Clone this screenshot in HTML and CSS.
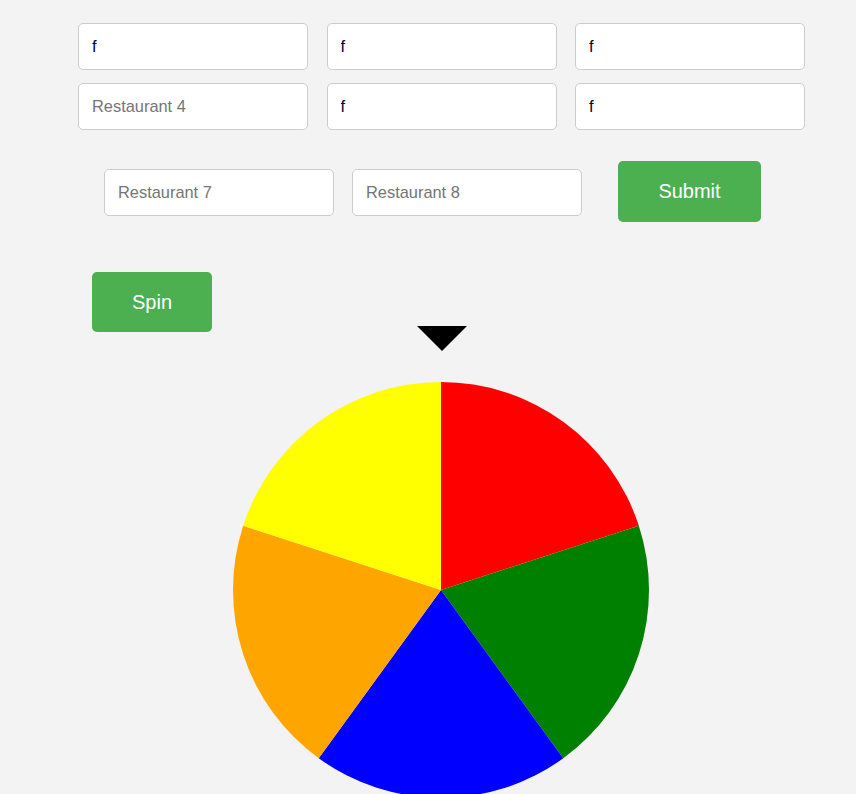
FILE: index.html
```html
<!DOCTYPE html>
<html>
<head>
<meta charset="utf-8">
<link rel="stylesheet" href="styles.css">
</head>
<body>
<div class="page">
  <div class="grid">
    <input class="field" type="text" value="f">
    <input class="field" type="text" value="f">
    <input class="field" type="text" value="f">
    <input class="field" type="text" placeholder="Restaurant 4">
    <input class="field" type="text" value="f">
    <input class="field" type="text" value="f">
  </div>
  <div class="row">
    <input class="field" type="text" placeholder="Restaurant 7">
    <input class="field" type="text" placeholder="Restaurant 8">
    <button class="btn submit">Submit</button>
  </div>
  <button class="btn spin">Spin</button>
  <div class="pointer"></div>
  <svg class="wheel" width="416" height="416" viewBox="0 0 416 416">
    <path d="M208 208 L208 0 A208 208 0 0 1 405.82 143.73 Z" fill="#ff0000"/>
    <path d="M208 208 L405.82 143.73 A208 208 0 0 1 330.26 376.27 Z" fill="#008000"/>
    <path d="M208 208 L330.26 376.27 A208 208 0 0 1 85.74 376.27 Z" fill="#0000ff"/>
    <path d="M208 208 L85.74 376.27 A208 208 0 0 1 10.18 143.73 Z" fill="#ffa500"/>
    <path d="M208 208 L10.18 143.73 A208 208 0 0 1 208 0 Z" fill="#ffff00"/>
  </svg>
</div>
</body>
</html>
```
FILE: styles.css
```css
html, body {
  margin: 0;
  padding: 0;
  background: #f3f3f3;
  font-family: "Liberation Sans", Arial, sans-serif;
}
.page {
  display: flex;
  flex-direction: column;
  align-items: flex-start;
  padding-top: 23px;
}
.grid {
  display: grid;
  grid-template-columns: 230px 230px 230px;
  column-gap: 18.5px;
  row-gap: 13px;
  margin-left: 78px;
}
.field {
  box-sizing: border-box;
  width: 230px;
  height: 47px;
  padding: 0 13px;
  border: 1px solid #cccccc;
  border-radius: 5px;
  background: #ffffff;
  font-family: "Liberation Sans", Arial, sans-serif;
  font-size: 16.4px;
  color: #000033;
  outline: none;
}
.field::placeholder {
  color: #757575;
}
.row {
  display: flex;
  align-items: flex-start;
  margin-top: 31px;
  margin-left: 104px;
}
.row .field {
  margin-top: 8px;
}
.row .field + .field {
  margin-left: 18px;
}
.btn {
  box-sizing: border-box;
  height: 60px;
  border: none;
  border-radius: 5px;
  background: #4caf50;
  color: #ffffff;
  font-family: "Liberation Sans", Arial, sans-serif;
  font-size: 20px;
  cursor: pointer;
}
.submit {
  width: 143px;
  height: 61px;
  margin-left: 36px;
}
.spin {
  width: 120px;
  margin-top: 50px;
  margin-left: 92px;
}
.pointer {
  width: 0;
  height: 0;
  border-left: 25px solid transparent;
  border-right: 25px solid transparent;
  border-top: 25px solid #000000;
  margin-top: -6px;
  margin-left: 417px;
}
.wheel {
  display: block;
  margin-top: 31px;
  margin-left: 233px;
}
```
